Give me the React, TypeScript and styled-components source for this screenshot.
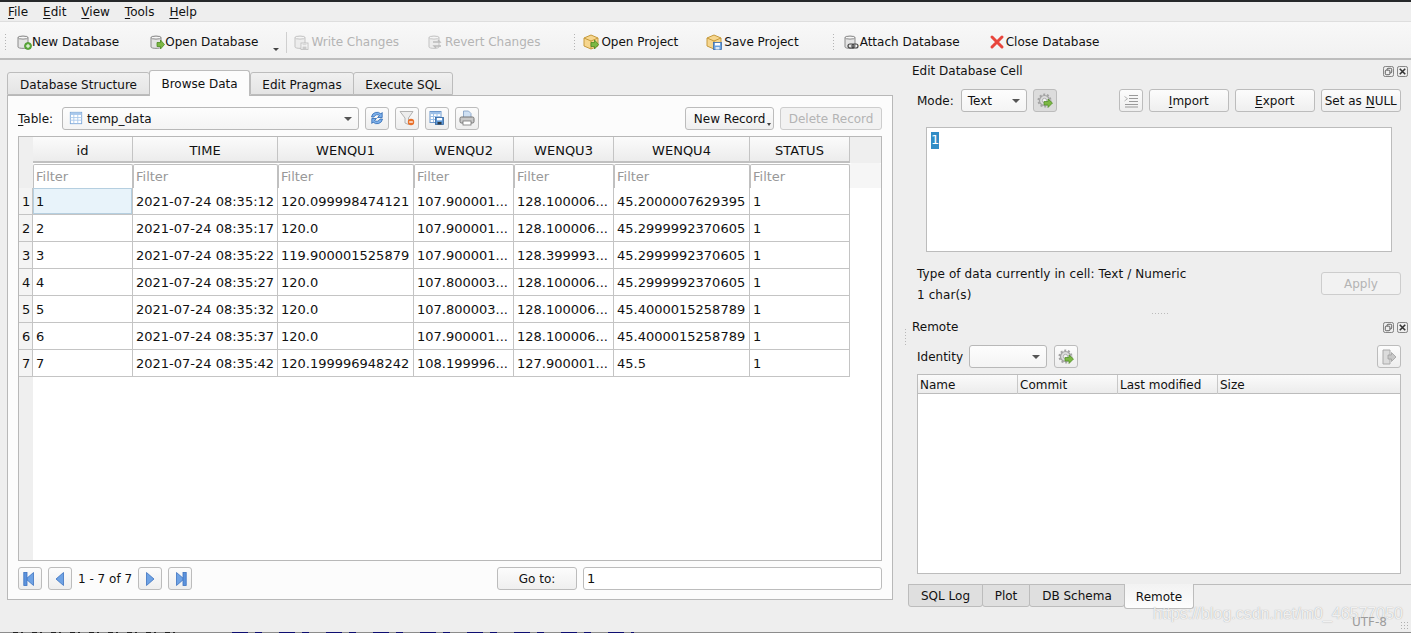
import React from "react";
import styled, { createGlobalStyle } from "styled-components";

const Global = createGlobalStyle`
  html, body { margin: 0; padding: 0; background: #eeeeee; }
  * { box-sizing: border-box; }
  u { text-underline-offset: 2px; text-decoration-thickness: 1px; }
`;

const Root = styled.div`
  position: relative;
  width: 1411px;
  height: 633px;
  overflow: hidden;
  display: flex;
  flex-direction: column;
  background: #eeeeee;
  color: #111;
  font: 12px/16px "DejaVu Sans", sans-serif;
`;
const TopEdge = styled.div`height: 2px; background: #26282a; flex: none;`;
const MenuBar = styled.div`
  height: 20px; flex: none; display: flex; gap: 15px; padding-left: 8px; align-items: center;
  border-bottom: 1px solid #dedede;
`;
const MenuItem = styled.span``;
const Toolbar = styled.div`
  height: 38px; flex: none; display: flex; align-items: center; padding: 4px 0 0 4px;
  background: linear-gradient(#f8f8f8, #f1f1f1);
  border-bottom: 2px solid #bdbdbd;
`;
const Grip = styled.div<{ $ml?: number }>`
  width: 3px; height: 18px; margin-left: ${p => p.$ml ?? 0}px;
  background-image: radial-gradient(#b4b4b4 0.7px, transparent 0.8px);
  background-size: 3px 3px;
`;
const ToolButton = styled.div<{ $ml: number; $off?: boolean }>`
  display: flex; align-items: center; margin-left: ${p => p.$ml}px;
  color: ${p => (p.$off ? "#b4b4b4" : "#111")};
  white-space: nowrap;
  svg { flex: none; opacity: ${p => (p.$off ? 0.45 : 1)}; }
`;
const DropArrow = styled.div`
  width: 0; height: 0; margin: 15px 0 0 15px;
  border-left: 3px solid transparent; border-right: 3px solid transparent; border-top: 3px solid #444;
`;
const VSep = styled.div`width: 1px; height: 21px; background: #cfcfcf; margin: 0 6px 0 7px;`;

const Main = styled.div`display: flex; height: 572px; flex: none;`;
const LeftCol = styled.div`width: 908px; flex: none; padding: 10px 0 0 7px;`;
const TabBar = styled.div`display: flex; height: 25px; align-items: flex-end; position: relative; z-index: 1;`;
const Tab = styled.div<{ $w: number; $on?: boolean }>`
  width: ${p => p.$w}px;
  height: ${p => (p.$on ? 26 : 23)}px;
  margin-bottom: ${p => (p.$on ? -1 : 0)}px;
  display: flex; align-items: center; justify-content: center;
  padding-top: ${p => (p.$on ? 1 : 2)}px;
  border: 1px solid #bcbcbc;
  border-bottom: ${p => (p.$on ? "none" : "1px solid #bcbcbc")};
  border-radius: 3px 3px 0 0;
  margin-right: ${p => (p.$on ? 0 : -1)}px;
  background: ${p => (p.$on ? "#fcfcfc" : "linear-gradient(#f0f0f0, #e4e4e4)")};
`;
const Panel = styled.div`
  width: 886px; height: 505px; background: #fcfcfc; border: 1px solid #b8b8b8;
  padding: 10px 10px 0 10px;
  display: flex; flex-direction: column;
`;
const TableRow = styled.div`display: flex; align-items: center; height: 24px;`;
const Label = styled.span<{ $ml?: number; $drop?: number }>`
  margin-left: ${p => p.$ml ?? 0}px; padding-top: ${p => p.$drop ?? 0}px; white-space: nowrap;
`;
const Combo = styled.div<{ $w: number; $ml: number; $drop?: number }>`
  width: ${p => p.$w}px; height: 23px; margin-left: ${p => p.$ml}px; flex: none;
  border: 1px solid #b8b8b8; border-radius: 3px; background: linear-gradient(#fdfdfd, #f4f4f4);
  display: flex; align-items: center; padding: ${p => p.$drop ?? 0}px 4px 0 6px; gap: 4px;
  position: relative;
  svg { margin-top: -1px; }
  &::after {
    content: ""; position: absolute; right: 6px; top: 9px; width: 0; height: 0;
    border-left: 4px solid transparent; border-right: 4px solid transparent; border-top: 4px solid #555;
  }
`;
const IconBtn = styled.div<{ $ml?: number; $pressed?: boolean }>`
  width: 24px; height: 23px; flex: none; margin-left: ${p => p.$ml ?? 0}px;
  display: flex; align-items: center; justify-content: center;
  border: 1px solid #bcbcbc; border-radius: 3px;
  background: ${p => (p.$pressed ? "#dcdcdc" : "linear-gradient(#fcfcfc, #eeeeee)")};
`;
const Btn = styled.div<{ $w: number; $ml?: number; $off?: boolean; $drop?: number }>`
  width: ${p => p.$w}px; height: 23px; flex: none; margin-left: ${p => p.$ml ?? 0}px;
  padding-top: ${p => p.$drop ?? 0}px;
  display: flex; align-items: center; justify-content: center; white-space: nowrap;
  border: 1px solid ${p => (p.$off ? "#cdcdcd" : "#bcbcbc")}; border-radius: 3px;
  color: ${p => (p.$off ? "#b4b4b4" : "#111")};
  background: ${p => (p.$off ? "#f2f2f2" : "linear-gradient(#fcfcfc, #efefef)")};
  position: relative;
`;
const MiniArrow = styled.span`
  position: absolute; right: 2px; bottom: 3px; width: 0; height: 0;
  border-left: 2.5px solid transparent; border-right: 2.5px solid transparent; border-top: 3px solid #444;
`;

const Frame = styled.div`
  margin-top: 6px; width: 864px; height: 425px; border: 1px solid #b8b8b8; background: #fff; display: flex; flex: none;
  font-size: 13px;
`;
const RowHead = styled.div`
  width: 14px; flex: none; background: #efefef; padding-top: 51px;
`;
const RowNum = styled.div`
  height: 27px; display: flex; align-items: center; padding: 1px 0 0 3px;
  border-bottom: 1px solid #c4c4c4; border-right: 1px solid #c4c4c4; background: #f4f4f4;
  width: 14px;
`;
const GridArea = styled.div`flex: 1; min-width: 0;`;
const COLS = "100px 145px 136px 100px 100px 136px 100px 1fr";
const HeadRow = styled.div`
  display: grid; grid-template-columns: ${COLS}; height: 26px;
`;
const HeadCell = styled.div`
  display: flex; align-items: center; justify-content: center; padding-top: 4px;
  background: linear-gradient(#fbfbfb, #ececec);
  border-right: 1px solid #c4c4c4; border-bottom: 2px solid #c0c0c0;
  &:last-child { background: #efefef; border: none; }
`;
const FilterRow = styled.div`
  display: grid; grid-template-columns: ${COLS}; height: 25px;
`;
const FilterCell = styled.div`
  background: #fff; color: #989898; border: 1px solid #c0c0c0; border-bottom: none;
  border-radius: 2px 2px 0 0; padding: 1px 0 0 2px; display: flex; align-items: center;
  margin-top: 1px;
  &:last-child { background: #f6f6f6; border: none; margin-top: 0; }
`;
const DataRow = styled.div`
  display: grid; grid-template-columns: ${COLS}; height: 27px;
`;
const Cell = styled.div<{ $sel?: boolean }>`
  display: flex; align-items: center; padding: 1px 0 0 3px; white-space: nowrap; overflow: hidden;
  border-right: 1px solid #c4c4c4; border-bottom: 1px solid #c4c4c4;
  ${p => p.$sel && "background: #e8f3fa; box-shadow: inset 0 0 0 1px #b5cfe0;"}
`;
const Spacer = styled.div``;
const NavRow = styled.div`display: flex; align-items: center; margin-top: 6px; height: 23px;`;
const GoInput = styled.div`
  width: 299px; height: 23px; margin-left: 6px; border: 1px solid #bcbcbc; border-radius: 3px;
  background: #fff; padding: 1px 0 0 3px; display: flex; align-items: center; font-size: 13px;
`;

const RightCol = styled.div`flex: 1; min-width: 0; display: flex; flex-direction: column; position: relative;`;
const DockTitle = styled.div<{ $mt?: number }>`
  height: 22px; flex: none; margin-top: ${p => p.$mt ?? 0}px; padding: 0 3px 0 4px; display: flex; align-items: center; justify-content: space-between;
`;
const DockBtns = styled.div`display: flex; gap: 3px;`;
const DockRow = styled.div<{ $mt: number }>`
  display: flex; align-items: center; height: 23px; margin-top: ${p => p.$mt}px; padding-left: 9px; flex: none;
`;
const Editor = styled.div`
  width: 466px; height: 125px; margin: 15px 0 0 18px; background: #fff; border: 1px solid #bcbcbc; padding: 4px; flex: none; font-size: 13px;
`;
const Selected = styled.span`background: #308cc6; color: #fff; display: inline-block; height: 17px;`;
const InfoRow = styled.div`display: flex; margin-top: 11px; padding-left: 9px; height: 42px; flex: none;`;
const InfoText = styled.div`width: 404px; line-height: 21px; padding-top: 1px; letter-spacing: 0.1px;`;
const ApplyWrap = styled.div`padding-top: 9px;`;
const HSplit = styled.div`
  width: 18px; height: 3px; margin: 7px 0 0 243px; flex: none;
  background-image: radial-gradient(#bbb 0.7px, transparent 0.8px); background-size: 3px 3px;
`;
const RemoteTable = styled.div`
  width: 484px; height: 200px; margin: 6px 0 0 9px; border: 1px solid #bcbcbc; background: #fff; flex: none;
`;
const RemoteHead = styled.div`
  display: grid; grid-template-columns: 100px 100px 100px 1fr; height: 19px;
  background: linear-gradient(#fbfbfb, #ececec); border-bottom: 1px solid #bcbcbc;
`;
const RemoteCol = styled.div`padding: 1px 0 0 2px; border-right: 1px solid #c8c8c8; line-height: 18px; &:last-child { border: none; }`;
const BottomTabs = styled.div`
  display: flex; align-items: flex-start; height: 24px; margin-top: 10px; flex: none; border-top: 1px solid #bcbcbc;
`;
const BottomTab = styled.div<{ $w: number; $on?: boolean }>`
  width: ${p => p.$w}px; height: ${p => (p.$on ? 25 : 23)}px; margin-top: -1px;
  display: flex; align-items: center; justify-content: center;
  padding-top: ${p => (p.$on ? 2 : 0)}px;
  border: 1px solid #bcbcbc; border-radius: 0 0 3px 3px; margin-right: -1px;
  border-top: ${p => (p.$on ? "none" : "1px solid #bcbcbc")};
  background: ${p => (p.$on ? "linear-gradient(#f2f2f2, #fdfdfd)" : "#dfdfdf")};
  position: relative;
`;
const Footer = styled.div`
  height: 1px; flex: none; background: #8c8c8c; position: relative;
`;
const FooterInk = styled.div`
  position: absolute; top: 0; left: 232px; width: 402px; height: 1px;
  background: repeating-linear-gradient(90deg, #0d0d70 0 16px, transparent 16px 23px, #0d0d70 23px 30px, transparent 30px 47px);
`;
const FooterInkDark = styled.div`
  position: absolute; top: 0; left: 13px; width: 165px; height: 1px;
  background: repeating-linear-gradient(90deg, #222 0 5px, transparent 5px 8px, #222 8px 10px, transparent 10px 19px);
`;
const Watermark = styled.div`
  position: absolute; left: 1153px; top: 604px; white-space: nowrap;
  font: 16px/20px "Liberation Sans", sans-serif; color: rgba(255,255,255,0.85);
  text-shadow: 0 0 1px rgba(120,120,120,0.7);
`;
const Encoding = styled.div`position: absolute; left: 1352px; top: 614px; color: #9c9c9c; font-size: 12px;`;
const SizeGrip = styled.div`
  position: absolute; right: 3px; bottom: 3px; width: 8px; height: 9px;
  background-image: radial-gradient(#b0b0b0 0.7px, transparent 0.8px); background-size: 3px 3px;
`;
const SideGrip = styled.div`
  position: absolute; left: 904px; top: 328px; width: 2px; height: 18px;
  background-image: radial-gradient(#b8b8b8 0.7px, transparent 0.8px); background-size: 3px 3px;
`;

/* ---------- icons ---------- */
const Cyl = () => (
  <>
    <path d="M2 3.5C2 2 12 2 12 3.5V13c0 1.8-10 1.8-10 0z" fill="#e4e4e4" stroke="#8a8a8a" />
    <ellipse cx="7" cy="3.6" rx="5" ry="1.5" fill="#f7f7f7" stroke="#8a8a8a" />
  </>
);
const Svg: React.FC<{ children: React.ReactNode; s?: number }> = ({ children, s = 16 }) => (
  <svg width={s} height={s} viewBox="0 0 16 16">{children}</svg>
);
const GreenArrow = () => <path d="M8 8.5h3.5V6L15.5 10.5 11.5 15v-2.5H8z" fill="#7cb843" stroke="#4b8a22" strokeWidth=".8" />;
const Floppy = () => (
  <>
    <rect x="8" y="9" width="7" height="6.5" fill="#fff" stroke="#777" strokeWidth=".8" />
    <rect x="9.5" y="9.3" width="4" height="2" fill="#bbb" />
    <rect x="9.5" y="12.5" width="4" height="3" fill="#999" />
  </>
);
const IcoNew = () => <Svg><Cyl /><circle cx="12" cy="12" r="3.5" fill="#5fae3c" stroke="#3e8a24" strokeWidth=".7" /><path d="M12 10v4M10 12h4" stroke="#fff" /></Svg>;
const IcoOpen = () => <Svg><Cyl /><GreenArrow /></Svg>;
const IcoWrite = () => <Svg><Cyl /><Floppy /></Svg>;
const IcoRevert = () => <Svg><Cyl /><path d="M6 8h7l-2-2M14 12H7l2 2" fill="none" stroke="#777" strokeWidth="1.3" /></Svg>;
const Box = () => (
  <>
    <path d="M8 1l7 3v8l-7 3-7-3V4z" fill="#f6d68e" stroke="#c69a3c" />
    <path d="M1 4l7 3 7-3M8 7v8" fill="none" stroke="#c69a3c" />
  </>
);
const IcoProjOpen = () => <Svg><Box /><GreenArrow /></Svg>;
const IcoProjSave = () => (
  <Svg><Box />
    <rect x="7.5" y="8.5" width="8" height="7" fill="#6aa2e0" stroke="#3d6fb0" strokeWidth=".8" />
    <rect x="9" y="9" width="5" height="2.5" fill="#fff" />
    <rect x="9.5" y="13" width="4" height="2.5" fill="#dce9f7" />
  </Svg>
);
const IcoAttach = () => <Svg><Cyl /><rect x="5" y="10" width="6" height="4" rx="2" fill="none" stroke="#444" strokeWidth="1.2" /><rect x="9" y="10" width="6" height="4" rx="2" fill="none" stroke="#444" strokeWidth="1.2" /></Svg>;
const IcoClose = () => <Svg><path d="M3 3l10 10M13 3L3 13" stroke="#e8453c" strokeWidth="3" strokeLinecap="round" /></Svg>;
const IcoGrid = ({ s = 14 }: { s?: number }) => (
  <Svg s={s}>
    <rect x="1.5" y="1.5" width="13" height="13" fill="#fff" stroke="#7ba6d8" />
    <rect x="2" y="2" width="12" height="2.5" fill="#a8c8ec" />
    <path d="M1.5 7.5h13M1.5 10.5h13M5.5 4v10M10 4v10" stroke="#a8c8ec" />
  </Svg>
);
const IcoRefresh = () => (
  <Svg>
    <path d="M2.5 7a5.5 5.5 0 0 1 9.5-3l1.2-1.5V7.5H8.5L10.5 5.5A3.5 3.5 0 0 0 5 7z" fill="#7db0ea" stroke="#2c68b4" strokeWidth=".8" />
    <path d="M13.5 9a5.5 5.5 0 0 1-9.5 3l-1.2 1.5V8.5H7.5L5.5 10.5A3.5 3.5 0 0 0 11 9z" fill="#7db0ea" stroke="#2c68b4" strokeWidth=".8" />
  </Svg>
);
const IcoFilter = () => (
  <Svg>
    <path d="M1 1.5h13L9.5 8v6.5L6 13V8z" fill="#ededed" stroke="#b2b2b2" />
    <circle cx="12" cy="12" r="3.2" fill="#e8702a" />
    <path d="M10.2 12h3.6" stroke="#fff" strokeWidth="1.3" />
  </Svg>
);
const IcoTableSave = () => (
  <Svg>
    <rect x="1" y="1.5" width="11" height="11" fill="#fff" stroke="#6d98cc" />
    <rect x="1.5" y="2" width="10" height="2.2" fill="#9dc0e8" />
    <path d="M1 6.5h11M1 9.5h11M4.5 4v8M8 4v8" stroke="#9dc0e8" />
    <rect x="6.5" y="7.5" width="8" height="7" fill="#5d97d6" stroke="#33659f" strokeWidth=".8" />
    <rect x="8" y="8" width="5" height="2.4" fill="#fff" />
    <rect x="8.5" y="12" width="4" height="2.4" fill="#2e3a45" />
  </Svg>
);
const IcoPrint = () => (
  <Svg>
    <path d="M4.5 1h5l2.5 2.5V8H4.5z" fill="#cfe0f3" stroke="#7e9cc0" strokeWidth=".8" />
    <rect x="1" y="7" width="14" height="6" rx="1.5" fill="#c8c8c8" stroke="#757575" />
    <rect x="4" y="11" width="8" height="4" fill="#fff" stroke="#757575" strokeWidth=".8" />
  </Svg>
);
const IcoGear = () => (
  <Svg>
    <circle cx="7.5" cy="7.5" r="5" fill="#dcdcdc" stroke="#a4a4a4" strokeWidth="1.2" />
    <circle cx="7.5" cy="7.5" r="6" fill="none" stroke="#a4a4a4" strokeWidth="2" strokeDasharray="2 1.75" />
    <circle cx="7.5" cy="7.5" r="2.2" fill="#f4f4f4" stroke="#a4a4a4" strokeWidth=".8" />
    <path d="M7 8.5h4V6l4.5 4-4.5 4.5V12H7z" fill="#7cb843" stroke="#4b8a22" strokeWidth=".7" />
  </Svg>
);
const IcoLines = () => (
  <Svg>
    <path d="M6 2.5h9M6 5.5h9M6 8.5h9M2 11.5h13M2 14h13" stroke="#9a9a9a" />
    <path d="M1.5 3.5L4.5 5.7 1.5 8" fill="none" stroke="#b5b5b5" />
  </Svg>
);
const IcoDocOut = () => (
  <Svg>
    <path d="M2 1h7v14H2z" fill="#dcdcdc" stroke="#aaa" />
    <path d="M7 6h3.5V3.5l4.5 4.5-4.5 4.5V10H7z" fill="#c8c8c8" stroke="#a0a0a0" strokeWidth=".8" />
  </Svg>
);
const NavIcon = ({ dir, bar }: { dir: "l" | "r"; bar?: boolean }) => (
  <Svg>
    <g transform={dir === "l" ? "matrix(-1 0 0 1 16 0)" : undefined}>
      <path d="M4.5 1.5L12 8 4.5 14.5z" fill="#6ea2e4" stroke="#3c72c0" strokeWidth=".8" />
      {bar && <rect x="11" y="1.5" width="3.2" height="13" fill="#5c93dc" stroke="#3c72c0" strokeWidth=".8" />}
    </g>
  </Svg>
);
const DockFloat = () => (
  <svg width="11" height="11" viewBox="0 0 12 12">
    <rect x=".5" y=".5" width="11" height="11" rx="2" fill="#eee" stroke="#777" />
    <rect x="4.5" y="2.5" width="5" height="5" rx="1" fill="none" stroke="#555" />
    <rect x="2.5" y="4.5" width="5" height="5" rx="1" fill="#eee" stroke="#555" />
  </svg>
);
const DockClose = () => (
  <svg width="11" height="11" viewBox="0 0 12 12">
    <rect x=".5" y=".5" width="11" height="11" rx="2" fill="#eee" stroke="#777" />
    <path d="M3 3l6 6M9 3l-6 6" stroke="#333" strokeWidth="1.7" />
  </svg>
);

/* ---------- data ---------- */
const HEADERS = ["id", "TIME", "WENQU1", "WENQU2", "WENQU3", "WENQU4", "STATUS"];
const ROWS = [
  ["1", "2021-07-24 08:35:12", "120.099998474121", "107.900001...", "128.100006...", "45.2000007629395", "1"],
  ["2", "2021-07-24 08:35:17", "120.0", "107.900001...", "128.100006...", "45.2999992370605", "1"],
  ["3", "2021-07-24 08:35:22", "119.900001525879", "107.900001...", "128.399993...", "45.2999992370605", "1"],
  ["4", "2021-07-24 08:35:27", "120.0", "107.800003...", "128.100006...", "45.2999992370605", "1"],
  ["5", "2021-07-24 08:35:32", "120.0", "107.800003...", "128.100006...", "45.4000015258789", "1"],
  ["6", "2021-07-24 08:35:37", "120.0", "107.900001...", "128.100006...", "45.4000015258789", "1"],
  ["7", "2021-07-24 08:35:42", "120.199996948242", "108.199996...", "127.900001...", "45.5", "1"],
];

export default function App() {
  return (
    <Root>
      <Global />
      <TopEdge />
      <MenuBar>
        <MenuItem><u>F</u>ile</MenuItem>
        <MenuItem><u>E</u>dit</MenuItem>
        <MenuItem><u>V</u>iew</MenuItem>
        <MenuItem><u>T</u>ools</MenuItem>
        <MenuItem><u>H</u>elp</MenuItem>
      </MenuBar>
      <Toolbar>
        <Grip />
        <ToolButton $ml={9}><IcoNew />New Database</ToolButton>
        <ToolButton $ml={30}><IcoOpen />Open Database</ToolButton>
        <DropArrow />
        <VSep />
        <ToolButton $off $ml={0}><IcoWrite /><Label $ml={2}>Write Changes</Label></ToolButton>
        <ToolButton $off $ml={28}><IcoRevert /><Label $ml={2}>Revert Changes</Label></ToolButton>
        <Grip $ml={33} />
        <ToolButton $ml={7}><IcoProjOpen /><Label $ml={2}>Open Project</Label></ToolButton>
        <ToolButton $ml={28}><IcoProjSave /><Label $ml={2}>Save Project</Label></ToolButton>
        <Grip $ml={33} />
        <ToolButton $ml={8}><IcoAttach /><Label $ml={1}>Attach Database</Label></ToolButton>
        <ToolButton $ml={29}><IcoClose /><Label $ml={1}>Close Database</Label></ToolButton>
      </Toolbar>
      <Main>
        <LeftCol>
          <TabBar>
            <Tab $w={143}>Database Structure</Tab>
            <Tab $on $w={101}>Browse Data</Tab>
            <Tab $w={104}>Edit Pragmas</Tab>
            <Tab $w={100}>Execute SQL</Tab>
          </TabBar>
          <Panel>
            <TableRow>
              <Label $drop={1}><u>T</u>able:</Label>
              <Combo $w={297} $ml={9} $drop={1}><IcoGrid />temp_data</Combo>
              <IconBtn $ml={6}><IcoRefresh /></IconBtn>
              <IconBtn $ml={6}><IcoFilter /></IconBtn>
              <IconBtn $ml={6}><IcoTableSave /></IconBtn>
              <IconBtn $ml={6}><IcoPrint /></IconBtn>
              <Btn $w={89} $ml={206} $drop={1}>New Record<MiniArrow /></Btn>
              <Btn $off $w={102} $ml={6} $drop={1}>Delete Record</Btn>
            </TableRow>
            <Frame>
              <RowHead>
                {ROWS.map(r => <RowNum key={r[0]}>{r[0]}</RowNum>)}
              </RowHead>
              <GridArea>
                <HeadRow>
                  {HEADERS.map(h => <HeadCell key={h}>{h}</HeadCell>)}
                  <HeadCell />
                </HeadRow>
                <FilterRow>
                  {HEADERS.map(h => <FilterCell key={h}>Filter</FilterCell>)}
                  <FilterCell />
                </FilterRow>
                {ROWS.map((r, i) => (
                  <DataRow key={r[0]}>
                    {r.map((c, j) => <Cell key={j} $sel={i === 0 && j === 0}>{c}</Cell>)}
                    <Spacer />
                  </DataRow>
                ))}
              </GridArea>
            </Frame>
            <NavRow>
              <IconBtn><NavIcon dir="l" bar /></IconBtn>
              <IconBtn $ml={6}><NavIcon dir="l" /></IconBtn>
              <Label $ml={6} $drop={1}>1 - 7 of 7</Label>
              <IconBtn $ml={6}><NavIcon dir="r" /></IconBtn>
              <IconBtn $ml={6}><NavIcon dir="r" bar /></IconBtn>
              <Btn $w={80} $ml={305} $drop={1}>Go to:</Btn>
              <GoInput>1</GoInput>
            </NavRow>
          </Panel>
        </LeftCol>
        <RightCol>
          <DockTitle>
            <Label>Edit Database Cell</Label>
            <DockBtns><DockFloat /><DockClose /></DockBtns>
          </DockTitle>
          <DockRow $mt={7}>
            <Label>Mode:</Label>
            <Combo $w={66} $ml={7}>Text</Combo>
            <IconBtn $ml={6} $pressed><IcoGear /></IconBtn>
            <IconBtn $ml={62}><IcoLines /></IconBtn>
            <Btn $w={80} $ml={6}><span><u>I</u>mport</span></Btn>
            <Btn $w={80} $ml={6}><span><u>E</u>xport</span></Btn>
            <Btn $w={80} $ml={6}><span>Set as <u>N</u>ULL</span></Btn>
          </DockRow>
          <Editor><Selected>1</Selected></Editor>
          <InfoRow>
            <InfoText>Type of data currently in cell: Text / Numeric<br />1 char(s)</InfoText>
            <ApplyWrap><Btn $off $w={80}>Apply</Btn></ApplyWrap>
          </InfoRow>
          <HSplit />
          <DockTitle $mt={1}>
            <Label>Remote</Label>
            <DockBtns><DockFloat /><DockClose /></DockBtns>
          </DockTitle>
          <DockRow $mt={7}>
            <Label>Identity</Label>
            <Combo $w={78} $ml={6} />
            <IconBtn $ml={7}><IcoGear /></IconBtn>
            <IconBtn $ml={299}><IcoDocOut /></IconBtn>
          </DockRow>
          <RemoteTable>
            <RemoteHead>
              <RemoteCol>Name</RemoteCol>
              <RemoteCol>Commit</RemoteCol>
              <RemoteCol>Last modified</RemoteCol>
              <RemoteCol>Size</RemoteCol>
            </RemoteHead>
          </RemoteTable>
          <BottomTabs>
            <BottomTab $w={75}>SQL Log</BottomTab>
            <BottomTab $w={48}>Plot</BottomTab>
            <BottomTab $w={96}>DB Schema</BottomTab>
            <BottomTab $on $w={70}>Remote</BottomTab>
          </BottomTabs>
        </RightCol>
      </Main>
      <Footer><FooterInkDark /><FooterInk /></Footer>
      <SideGrip />
      <Watermark>https://blog.csdn.net/m0_46577050</Watermark>
      <Encoding>UTF-8</Encoding>
      <SizeGrip />
    </Root>
  );
}
